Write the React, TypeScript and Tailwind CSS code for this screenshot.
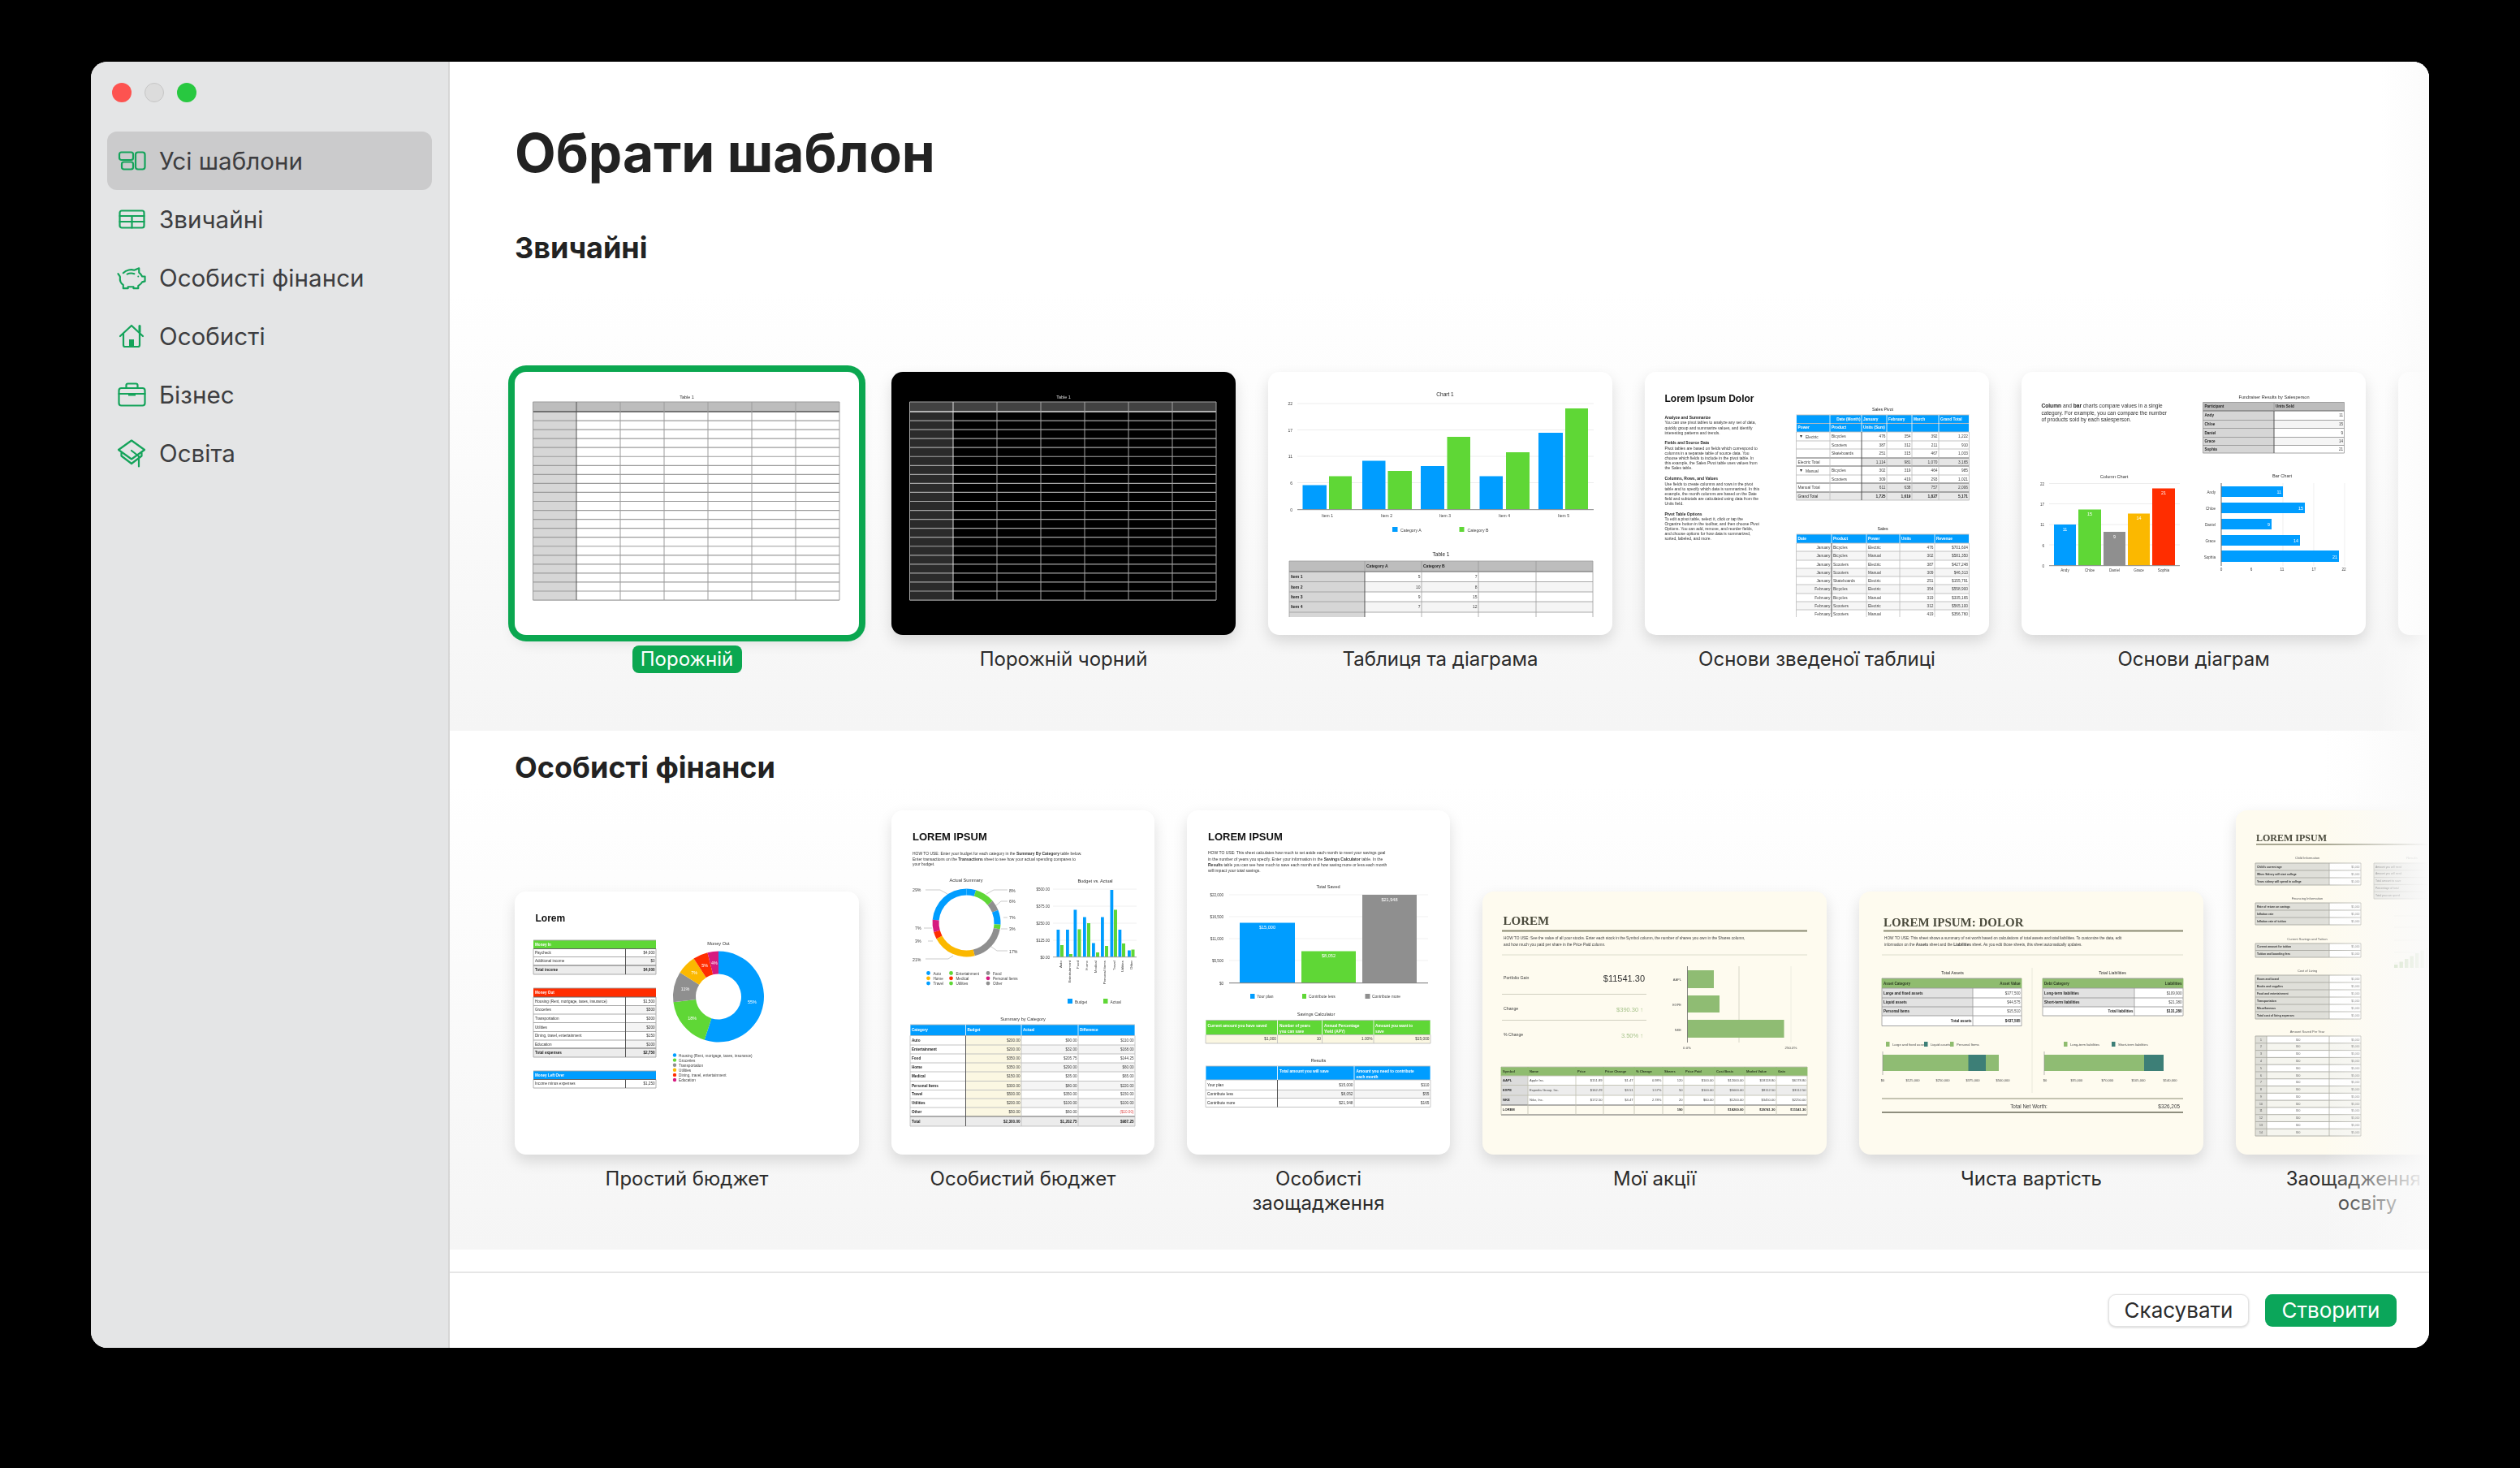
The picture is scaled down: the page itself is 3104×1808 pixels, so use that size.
import React from "react";

const BLUE = "#009dff", GREEN = "#5fd736", GRAY = "#8f8f8f", ORANGE = "#fbb800", RED = "#ff2d00", MAG = "#d61a7f";
const SAGE = "#8fbc6f";
const TONE: Record<string, string> = { "#555": "#3c3c3c", "#444": "#303030", "#666": "#484848", "#777": "#5a5a5a", "#333": "#222" };

type TP = { x: number; y: number; s?: number; b?: boolean; a?: "start" | "middle" | "end"; c?: string; serif?: boolean; rot?: number; children?: React.ReactNode };
function T({ x, y, s = 5, b, a = "start", c = "#333", serif, rot, children }: TP) {
  return (
    <text x={x} y={y} fontSize={s} fontWeight={b ? 700 : 400} textAnchor={a} fill={TONE[c] || c}
      fontFamily={serif ? "Liberation Serif, serif" : "Liberation Sans, sans-serif"}
      transform={rot !== undefined ? `rotate(${rot} ${x} ${y})` : undefined}>
      {children}
    </text>
  );
}
type CS = { fill?: string; b?: boolean; a?: "l" | "r" | "c"; c?: string };
type TbP = { cols: number[]; ys: number[]; data: string[][]; st: (r: number, c: number) => CS; s?: number; line?: string; dark?: number[]; darkH?: number[]; hdr?: number; hdrLine?: string; noBottom?: boolean };
function Tb({ cols, ys, data, st, s = 5, line = "#a0a0a0", dark = [], darkH = [], hdr = 1, hdrLine = "#ffffff", noBottom }: TbP) {
  const out: React.ReactNode[] = [];
  for (let r = 0; r < ys.length - 1; r++) {
    for (let c = 0; c < cols.length - 1; c++) {
      const k = st(r, c);
      if (k.fill) out.push(<rect key={`f${r}-${c}`} x={cols[c]} y={ys[r]} width={cols[c + 1] - cols[c]} height={ys[r + 1] - ys[r]} fill={k.fill} />);
    }
  }
  ys.forEach((y, i) => {
    if (noBottom && i === ys.length - 1) return;
    out.push(<line key={`h${i}`} x1={cols[0]} x2={cols[cols.length - 1]} y1={y} y2={y} stroke={darkH.includes(i) ? "#666" : line} strokeWidth={darkH.includes(i) ? 1.2 : 0.9} />);
  });
  cols.forEach((x, i) => {
    if (hdr > 0) out.push(<line key={`vh${i}`} x1={x} x2={x} y1={ys[0]} y2={ys[hdr]} stroke={hdrLine} strokeWidth={0.8} />);
    out.push(<line key={`v${i}`} x1={x} x2={x} y1={ys[hdr]} y2={ys[ys.length - 1]} stroke={dark.includes(i) ? "#555" : line} strokeWidth={dark.includes(i) ? 1 : 0.8} />);
  });
  data.forEach((row, r) =>
    row.forEach((t, c) => {
      if (!t) return;
      const k = st(r, c);
      const al = k.a || "l";
      const x = al === "l" ? cols[c] + 2 : al === "r" ? cols[c + 1] - 1.5 : (cols[c] + cols[c + 1]) / 2;
      out.push(
        <T key={`t${r}-${c}`} x={x} y={(ys[r] + ys[r + 1]) / 2 + s * 0.35} s={s} b={k.b} c={k.c || "#333"} a={al === "l" ? "start" : al === "r" ? "end" : "middle"}>
          {t}
        </T>
      );
    })
  );
  return <g>{out}</g>;
}
function arc(cx: number, cy: number, r0: number, r1: number, a0: number, a1: number) {
  const p = (r: number, a: number) => {
    const t = ((a - 90) * Math.PI) / 180;
    return `${(cx + r * Math.cos(t)).toFixed(2)} ${(cy + r * Math.sin(t)).toFixed(2)}`;
  };
  const lg = a1 - a0 > 180 ? 1 : 0;
  return `M${p(r1, a0)}A${r1} ${r1} 0 ${lg} 1 ${p(r1, a1)}L${p(r0, a1)}A${r0} ${r0} 0 ${lg} 0 ${p(r0, a0)}Z`;
}
function R({ x, y, x2, y2, f }: { x: number; y: number; x2: number; y2: number; f: string }) {
  return <rect x={x} y={y} width={x2 - x} height={y2 - y} fill={f} />;
}
function Hl({ x, x2, y, c = "#e8e8e8", w = 0.8 }: { x: number; x2: number; y: number; c?: string; w?: number }) {
  return <line x1={x} x2={x2} y1={y} y2={y} stroke={c} strokeWidth={w} />;
}
function Thumb({ w, h, children }: { w: number; h: number; children: React.ReactNode }) {
  return (
    <svg viewBox={`0 0 ${w} ${h}`} width={w} height={h} className="block blur-[0.3px]">
      {children}
    </svg>
  );
}

function Blank({ dark }: { dark?: boolean }) {
  const cols = [22.5, 76, 130, 184, 238, 292, 346, 400];
  const ys = [37, 49];
  for (let i = 1; i <= 21; i++) ys.push(49 + i * 11.05);
  const ln = dark ? "#a4a4a4" : "#9c9c9c";
  return (
    <Thumb w={424} h={324}>
      <T x={212} y={33} s={5.5} a="middle" c={dark ? "#ddd" : "#444"}>Table 1</T>
      <R x={22.5} y={37} x2={400} y2={49} f={dark ? "#424242" : "#bdbdbd"} />
      <R x={22.5} y={49} x2={76} y2={281} f={dark ? "#2b2b2b" : "#d6d6d6"} />
      {ys.map((y, i) => <Hl key={i} x={22.5} x2={400} y={y} c={i === 1 ? (dark ? "#ddd" : "#555") : ln} w={i === 1 ? 1.5 : 1.2} />)}
      {cols.map((x, i) => <line key={i} x1={x} x2={x} y1={37} y2={281} stroke={i === 1 ? (dark ? "#ddd" : "#555") : ln} strokeWidth={1} />)}
    </Thumb>
  );
}

function TableChart() {
  const gy = [39, 71.5, 104, 136.5];
  const bars: [number, number, number, string][] = [
    [42.5, 72, 139.5, BLUE], [75, 103, 128.5, GREEN], [116, 144.5, 109.5, BLUE], [147.5, 177, 122, GREEN],
    [188, 217, 116, BLUE], [220.5, 249, 80, GREEN], [260.5, 289, 128.5, BLUE], [293, 322, 99, GREEN],
    [333, 363, 75, BLUE], [366, 394, 45, GREEN],
  ];
  return (
    <Thumb w={424} h={324}>
      <T x={218} y={29.5} s={6.5} a="middle">Chart 1</T>
      {gy.map((y) => <Hl key={y} x={36} x2={401} y={y} />)}
      {["22", "17", "11", "6", "0"].map((t, i) => <T key={i} x={30} y={[41, 73.5, 106, 139, 171.5][i]} s={5} a="end" c="#555">{t}</T>)}
      {bars.map((b, i) => <R key={i} x={b[0]} x2={b[1]} y={b[2]} y2={169.5} f={b[3]} />)}
      <Hl x={36} x2={401} y={169.7} c="#888" w={1} />
      {[73, 146, 218, 291, 364].map((x, i) => <T key={i} x={x} y={179} s={5} a="middle" c="#555">{`Item ${i + 1}`}</T>)}
      <R x={153} x2={159.5} y={191} y2={197} f={BLUE} /><T x={163} y={196.5} s={5.2} c="#555">Category A</T>
      <R x={235.5} x2={241.5} y={191} y2={197} f={GREEN} /><T x={245.5} y={196.5} s={5.2} c="#555">Category B</T>
      <T x={213} y={227} s={6.5} a="middle">Table 1</T>
      <svg x={0} y={0} width={424} height={302}>
        <Tb cols={[26, 119, 189, 259, 330, 400]} ys={[233, 246, 258.5, 271, 283, 296, 308]} s={5} hdr={1} hdrLine="#999" dark={[1]} darkH={[1]}
          data={[["", "Category A", "Category B", "", ""], ["Item 1", "5", "7", "", ""], ["Item 2", "10", "8", "", ""], ["Item 3", "9", "15", "", ""], ["Item 4", "7", "12", "", ""], ["", "", "", "", ""]]}
          st={(r, c) => r === 0 ? { fill: "#bdbdbd", b: true } : c === 0 ? { fill: "#d6d6d6", b: true } : { fill: r % 2 === 0 ? "#f5f5f5" : "#fff", a: "r", c: "#555" }} />
      </svg>
    </Thumb>
  );
}

const PIVOT_TEXT: [number, string, boolean?][] = [
  [58, "Analyze and Summarize", true], [64, "You can use pivot tables to analyze any set of data,"], [70.5, "quickly group and summarize values, and identify"], [77, "interesting patterns and trends."],
  [89, "Fields and Source Data", true], [95.5, "Pivot tables are based on fields which correspond to"], [102, "columns in a separate table of source data. You"], [108, "choose which fields to include in the pivot table. In"], [114, "this example, the Sales Pivot table uses values from"], [120, "the Sales table."],
  [133, "Columns, Rows, and Values", true], [139.5, "Use fields to create columns and rows in the pivot"], [145.5, "table and to specify which data is summarized. In this"], [151.5, "example, the month columns are based on the Date"], [158, "field and subtotals are calculated using data from the"], [164, "Units field."],
  [177, "Pivot Table Options", true], [183, "To edit a pivot table, select it, click or tap the"], [189, "Organize button in the toolbar, and then choose Pivot"], [195, "Options. You can add, remove, and reorder fields,"], [201, "and choose options for how data is summarized,"], [207, "sorted, labeled, and more."],
];
function Pivot() {
  const sales = [["Date", "Product", "Power", "Units", "Revenue"], ["January", "Bicycles", "Electric", "476", "$701,604"], ["January", "Bicycles", "Manual", "302", "$581,350"], ["January", "Scooters", "Electric", "387", "$427,248"], ["January", "Scooters", "Manual", "309", "$46,313"], ["January", "Skateboards", "Electric", "251", "$155,791"], ["February", "Bicycles", "Electric", "354", "$558,900"], ["February", "Bicycles", "Manual", "319", "$335,165"], ["February", "Scooters", "Electric", "312", "$565,100"], ["February", "Scooters", "Manual", "419", "$356,760"]];
  const piv = [["", "Date (Month)", "January", "February", "March", "Grand Total"], ["Power", "Product", "Units (Sum)", "", "", ""], ["", "Bicycles", "476", "354", "392", "1,222"], ["", "Scooters", "387", "312", "211", "910"], ["", "Skateboards", "251", "315", "467", "1,033"], ["Electric Total", "", "1,114", "981", "1,070", "3,165"], ["", "Bicycles", "302", "319", "464", "985"], ["", "Scooters", "309", "419", "293", "1,021"], ["Manual Total", "", "611", "638", "757", "2,006"], ["Grand Total", "", "1,725", "1,619", "1,827", "5,171"]];
  return (
    <Thumb w={424} h={324}>
      <T x={24.5} y={37} s={12} b c="#111">Lorem Ipsum Dolor</T>
      {PIVOT_TEXT.map(([y, t, b], i) => <T key={i} x={24.5} y={y} s={4.95} b={b} c={b ? "#222" : "#444"}>{t}</T>)}
      <T x={293} y={48} s={5.2} a="middle">Sales Pivot</T>
      <Tb cols={[186.5, 228, 267, 298, 329, 362, 399.5]} ys={[53, 63.5, 74, 85, 95, 106, 116, 127, 137, 148, 158]} s={4.8} hdr={2} dark={[2]} darkH={[5, 6, 8, 9]} line="#bcbcbc" data={piv}
        st={(r, c) => r < 2 ? { fill: BLUE, c: "#fff", b: true, a: r === 0 && c === 1 ? "r" : "l" }
          : r === 5 || r === 8 ? { fill: c > 1 ? "#e6e6e6" : "#fff", a: c > 1 ? "r" : "l", c: "#555" }
          : r === 9 ? { fill: "#e8e8e8", a: c > 1 ? "r" : "l", b: c > 1, c: "#333" }
          : { a: c > 1 ? "r" : "l", c: "#555" }} />
      <path d="M191 78l3 0-1.5 3z M191 120l3 0-1.5 3z" fill="#222" />
      <T x={198} y={81.5} s={4.8} c="#555">Electric</T>
      <T x={198} y={124} s={4.8} c="#555">Manual</T>
      <T x={293} y={195} s={5.2} a="middle">Sales</T>
      <svg x={0} y={0} width={424} height={302}>
        <Tb cols={[186.5, 230, 273, 314, 357, 399.5]} ys={[200, 211, 221, 232, 242, 252, 262, 273, 283, 293, 304]} s={4.8} hdr={1} dark={[1]} line="#bcbcbc" data={sales}
          st={(r, c) => r === 0 ? { fill: BLUE, c: "#fff", b: true } : { fill: r % 2 === 0 ? "#f6f6f6" : "#fff", a: c === 0 || c > 2 ? "r" : "l", c: "#555" }} />
      </svg>
    </Thumb>
  );
}

function ChartBasics() {
  return (
    <Thumb w={424} h={324}>
      <text x={24.5} y={44} fontSize={6.6} fill="#333" fontFamily="Liberation Sans, sans-serif"><tspan fontWeight={700} fill="#222">Column</tspan> and <tspan fontWeight={700} fill="#222">bar</tspan> charts compare values in a single</text>
      <T x={24.5} y={52.5} s={6.6} c="#444">category. For example, you can compare the number</T>
      <T x={24.5} y={61} s={6.6} c="#444">of products sold by each salesperson.</T>
      <T x={311} y={33} s={5.6} a="middle" c="#444">Fundraiser Results by Salesperson</T>
      <Tb cols={[223.5, 311, 397.5]} ys={[37.5, 48, 59.5, 69.5, 80.5, 90.5, 100]} s={4.6} hdr={1} hdrLine="#999" dark={[1]} darkH={[1]} line="#999"
        data={[["Participant", "Units Sold"], ["Andy", "11"], ["Chloe", "15"], ["Daniel", "9"], ["Grace", "14"], ["Sophia", "21"]]}
        st={(r, c) => r === 0 ? { fill: "#bdbdbd", b: true } : c === 0 ? { fill: "#d6d6d6", b: true } : { fill: r % 2 === 0 ? "#f5f5f5" : "#fff", a: "r", c: "#555" }} />
      <T x={114} y={131} s={5.6} a="middle" c="#444">Column Chart</T>
      {[137.5, 162.5, 188, 213].map((y) => <Hl key={y} x={34} x2={195} y={y} />)}
      {["22", "17", "11", "6", "0"].map((t, i) => <T key={i} x={28} y={[140, 165, 190, 215.5, 240.5][i]} s={4.6} a="end" c="#555">{t}</T>)}
      {([[40, 67, 188, BLUE, "11", 53.5], [70, 98, 169.5, GREEN, "15", 84], [101, 128, 197, GRAY, "9", 114.5], [131, 158, 174.5, ORANGE, "14", 144.5], [161, 189, 143.5, RED, "21", 175]] as [number, number, number, string, string, number][]).map((b, i) => (
        <g key={i}>
          <R x={b[0]} x2={b[1]} y={b[2]} y2={238.5} f={b[3]} />
          <T x={b[5]} y={b[2] + 7.5} s={5.4} a="middle" c="#fff">{b[4]}</T>
          <T x={b[5]} y={246} s={4.6} a="middle" c="#555">{["Andy", "Chloe", "Daniel", "Grace", "Sophia"][i]}</T>
        </g>
      ))}
      <Hl x={34} x2={195} y={238.7} c="#888" w={1} />
      <T x={321} y={130} s={5.6} a="middle" c="#444">Bar Chart</T>
      {[322, 360, 398].map((x) => <line key={x} x1={x} x2={x} y1={137} y2={239} stroke="#eaeaea" strokeWidth={0.7} />)}
      {([[141, 154, 322, "11"], [161, 174, 349, "15"], [181, 194, 308, "9"], [201, 214, 343, "14"], [220, 234, 391, "21"]] as [number, number, number, string][]).map((b, i) => (
        <g key={i}>
          <R x={246} x2={b[2]} y={b[0]} y2={b[1]} f={BLUE} />
          <T x={b[2] - 2} y={b[1] - 4.5} s={5.4} a="end" c="#fff">{b[3]}</T>
          <T x={239} y={b[1] - 4.5} s={4.6} a="end" c="#555">{["Andy", "Chloe", "Daniel", "Grace", "Sophia"][i]}</T>
        </g>
      ))}
      <line x1={246} x2={246} y1={137} y2={239} stroke="#666" strokeWidth={1} />
      {[[246, "0"], [283, "6"], [321, "11"], [360, "17"], [397, "22"]].map(([x, t]) => <T key={x as number} x={x as number} y={245} s={4.6} a="middle" c="#555">{t}</T>)}
    </Thumb>
  );
}

function SimpleBudget() {
  const segs: [number, number, string, string][] = [[0, 198, BLUE, "55%"], [198, 263, GREEN, "18%"], [263, 302, GRAY, "11%"], [302, 327, ORANGE, "7%"], [327, 346, RED, "5%"], [346, 360, MAG, "4%"]];
  const lab = (a: number) => { const t = ((a - 90) * Math.PI) / 180; return [251 + 42 * Math.cos(t), 129.5 + 42 * Math.sin(t) + 2]; };
  const st0 = (n: number) => (r: number, c: number): CS => r === 0 ? { b: true, c: "#fff" } : r === n ? { fill: "#ececec", b: true, a: c === 1 ? "r" : "l" } : { fill: c === 1 && r % 2 === 0 ? "#f4f4f4" : "#fff", a: c === 1 ? "r" : "l", c: "#444" };
  return (
    <Thumb w={424} h={324}>
      <T x={25.5} y={37} s={12} b c="#111">Lorem</T>
      <R x={23} x2={174} y={60} y2={70.5} f={GREEN} />
      <Tb cols={[23, 136.5, 174]} ys={[60, 70.5, 80.5, 91, 102]} s={4.6} hdr={1} hdrLine="transparent" dark={[1]} darkH={[1, 3]} data={[["Money In", ""], ["Paycheck", "$4,000"], ["Additional income", "$0"], ["Total income", "$4,000"]]} st={st0(3)} />
      <R x={23} x2={174} y={119} y2={130} f={RED} />
      <Tb cols={[23, 136.5, 174]} ys={[119, 130, 140.5, 151, 161.5, 172.5, 183, 193, 204]} s={4.6} hdr={1} hdrLine="transparent" dark={[1]} darkH={[1, 7]} data={[["Money Out", ""], ["Housing (Rent, mortgage, taxes, insurance)", "$1,500"], ["Groceries", "$500"], ["Transportation", "$300"], ["Utilities", "$200"], ["Dining, travel, entertainment", "$150"], ["Education", "$100"], ["Total expenses", "$2,750"]]} st={st0(7)} />
      <R x={23} x2={174} y={221} y2={231.5} f={BLUE} />
      <Tb cols={[23, 136.5, 174]} ys={[221, 231.5, 242]} s={4.6} hdr={1} hdrLine="transparent" dark={[1]} darkH={[1]} data={[["Money Left Over", ""], ["Income minus expenses", "$1,250"]]} st={st0(9)} />
      <T x={251} y={66} s={5.6} a="middle" c="#444">Money Out</T>
      {segs.map((s, i) => <path key={i} d={arc(251, 129.5, 28, 56, s[0], s[1])} fill={s[2]} />)}
      {segs.map((s, i) => { const [x, y] = lab((s[0] + s[1]) / 2); return <T key={i} x={x} y={y} s={5.4} a="middle" c="#fff">{s[3]}</T>; })}
      {(["Housing (Rent, mortgage, taxes, insurance)", "Groceries", "Transportation", "Utilities", "Dining, travel, entertainment", "Education"]).map((t, i) => (
        <g key={i}>
          <circle cx={197} cy={201.5 + i * 6.1} r={2.2} fill={segs[i][2]} />
          <T x={202} y={203.5 + i * 6.1} s={4.7} c="#555">{t}</T>
        </g>
      ))}
    </Thumb>
  );
}

function PersonalBudget() {
  const ring: [number, number, string][] = [[-85, 16, BLUE], [16, 50, GREEN], [50, 68, GRAY], [68, 93, BLUE], [93, 101, GREEN], [101, 166, GRAY], [166, 242, ORANGE], [242, 254, RED], [254, 275, MAG]];
  const ang = (a: number) => a < 0 ? a + 360 : a;
  const blue = [147, 147, 122.5, 131.5, 163.5, 131.5, 98, 147, 172.5], green = [166, 177, 146.5, 139, 175, 167, 122.5, 164, 171.5];
  const bx = [203.5, 215, 224.5, 236, 247, 258, 269.5, 279.5, 291], gx = [208, 219, 229.5, 241, 252, 263, 274, 284, 295.5];
  const cats = ["Auto", "Entertainment", "Food", "Home", "Medical", "Personal Items", "Travel", "Utilities", "Other"];
  const data = [["Category", "Budget", "Actual", "Difference"], ["Auto", "$200.00", "$90.00", "$110.00"], ["Entertainment", "$200.00", "$32.00", "$168.00"], ["Food", "$350.00", "$205.75", "$144.25"], ["Home", "$350.00", "$290.00", "$60.00"], ["Medical", "$150.00", "$35.00", "$65.00"], ["Personal Items", "$300.00", "$80.00", "$220.00"], ["Travel", "$500.00", "$350.00", "$150.00"], ["Utilities", "$200.00", "$100.00", "$100.00"], ["Other", "$50.00", "$60.00", "($10.00)"], ["Total", "$2,300.00", "$1,202.75", "$987.25"]];
  return (
    <Thumb w={324} h={424}>
      <T x={26} y={37} s={13} b c="#111">LOREM IPSUM</T>
      <text x={26} y={54.5} fontSize={4.95} fill="#333" fontFamily="Liberation Sans, sans-serif">HOW TO USE: Enter your budget for each category in the <tspan fontWeight={700}>Summary By Category</tspan> table below.</text>
      <text x={26} y={61.5} fontSize={4.95} fill="#333" fontFamily="Liberation Sans, sans-serif">Enter transactions on the <tspan fontWeight={700}>Transactions</tspan> sheet to see how your actual spending compares to</text>
      <T x={26} y={68} s={4.95} c="#444">your budget.</T>
      <T x={92} y={88} s={5.6} a="middle" c="#444">Actual Summary</T>
      {ring.map((s, i) => s[0] < 0
        ? <g key={i}><path d={arc(92.5, 138.5, 34, 42, ang(s[0]), 360)} fill={s[2]} /><path d={arc(92.5, 138.5, 34, 42, 0, s[1])} fill={s[2]} /></g>
        : <path key={i} d={arc(92.5, 138.5, 34, 42, s[0], s[1])} fill={s[2]} />)}
      <g fill="none" stroke="#aaa" strokeWidth={0.6}>
        <path d="M42 98H60L69 103M143 98H126L117 103M143 112H135L128 118M143 132H138M143 146H135M143 173H130L123 168M40 145H50M45 161H51M42 183H70L76 179" />
      </g>
      {([[26, 100, "29%"], [145, 100.5, "8%"], [145, 114, "6%"], [145, 134, "7%"], [145, 147.5, "3%"], [145, 175.5, "17%"], [29, 147, "7%"], [29, 163, "3%"], [26, 185.5, "21%"]] as [number, number, string][]).map((l, i) => <T key={i} x={l[0]} y={l[1]} s={5.2} c="#555">{l[2]}</T>)}
      {([[45.5, BLUE, "Auto"], [73.5, GREEN, "Entertainment"], [119, GRAY, "Food"], [45.5, ORANGE, "Home"], [73.5, RED, "Medical"], [119, MAG, "Personal Items"], [45.5, BLUE, "Travel"], [73.5, GREEN, "Utilities"], [119, GRAY, "Other"]] as [number, string, string][]).map((l, i) => (
        <g key={i}>
          <circle cx={l[0]} cy={200.5 + Math.floor(i / 3) * 6.3} r={2.4} fill={l[1]} />
          <T x={l[0] + 6} y={202.5 + Math.floor(i / 3) * 6.3} s={4.6} c="#555">{l[2]}</T>
        </g>
      ))}
      <T x={251} y={89} s={5.6} a="middle" c="#444">Budget vs. Actual</T>
      {[97, 118, 139, 160].map((y) => <Hl key={y} x={199} x2={302} y={y} c="#ececec" />)}
      {["$500.00", "$375.00", "$250.00", "$125.00", "$0.00"].map((t, i) => <T key={i} x={195} y={[99, 120, 141, 162, 182.5][i]} s={4.6} a="end" c="#555">{t}</T>)}
      {bx.map((x, i) => <R key={i} x={x} x2={x + 3.8} y={blue[i]} y2={180.5} f={BLUE} />)}
      {gx.map((x, i) => <R key={i} x={x} x2={x + 4} y={green[i]} y2={180.5} f={GREEN} />)}
      <Hl x={199} x2={302} y={180.7} c="#888" />
      {cats.map((c, i) => <T key={i} x={bx[i] + 6} y={185} s={4.4} a="end" rot={-90} c="#555">{c}</T>)}
      <R x={217} x2={223} y={232} y2={238} f={BLUE} /><T x={226} y={237.5} s={4.8} c="#555">Budget</T>
      <R x={261} x2={266.5} y={232} y2={238} f={GREEN} /><T x={269.5} y={237.5} s={4.8} c="#555">Actual</T>
      <T x={162} y={259} s={5.6} a="middle" c="#444">Summary by Category</T>
      <Tb cols={[23, 91.5, 160, 230, 300]} ys={[264, 277.5, 289, 300, 311, 322, 333.5, 344.5, 355, 366, 377, 389]} s={4.6} hdr={1} dark={[1]} darkH={[10]} line="#bcbcbc" data={data}
        st={(r, c) => r === 0 ? { fill: BLUE, c: "#fff", b: true } : r === 10 ? { fill: "#ececec", b: true, a: c ? "r" : "l" } : c === 0 ? { b: true } : c === 1 ? { fill: "#fbf7e2", a: "r", c: "#555" } : { fill: r % 2 === 0 ? "#f5f5f5" : "#fff", a: "r", c: r === 9 && c === 3 ? "#e05050" : "#555" }} />
    </Thumb>
  );
}

function Savings() {
  return (
    <Thumb w={324} h={424}>
      <T x={26} y={37} s={13} b c="#111">LOREM IPSUM</T>
      <T x={26} y={54} s={5} c="#444">HOW TO USE: This sheet calculates how much to set aside each month to meet your savings goal</T>
      <text x={26} y={61.5} fontSize={5} fill="#333" fontFamily="Liberation Sans, sans-serif">in the number of years you specify. Enter your information in the <tspan fontWeight={700}>Savings Calculator</tspan> table. In the</text>
      <text x={26} y={68.5} fontSize={5} fill="#333" fontFamily="Liberation Sans, sans-serif"><tspan fontWeight={700}>Results</tspan> table you can see how much to save each month and how saving more or less each month</text>
      <T x={26} y={76} s={5} c="#444">will impact your total savings.</T>
      <T x={174} y={96} s={5.6} a="middle" c="#444">Total Saved</T>
      {[104, 131, 158, 185].map((y) => <Hl key={y} x={52} x2={297} y={y} c="#eee" />)}
      {["$22,000", "$16,500", "$11,000", "$5,500", "$0"].map((t, i) => <T key={i} x={45} y={[106, 133, 160, 187, 214.5][i]} s={4.6} a="end" c="#555">{t}</T>)}
      {([[65, 133, 138.5, BLUE, "$15,000"], [141, 208, 173.5, GREEN, "$8,052"], [216, 283, 104, GRAY, "$21,948"]] as [number, number, number, string, string][]).map((b, i) => (
        <g key={i}>
          <R x={b[0]} x2={b[1]} y={b[2]} y2={212.5} f={b[3]} />
          <T x={(b[0] + b[1]) / 2} y={b[2] + 7.5} s={5.6} a="middle" c="#fff">{b[4]}</T>
        </g>
      ))}
      <Hl x={52} x2={297} y={212.7} c="#777" w={1} />
      <R x={78} x2={83.5} y={226} y2={232} f={BLUE} /><T x={86} y={231} s={4.9} c="#555">Your plan</T>
      <R x={142} x2={147} y={226} y2={232} f={GREEN} /><T x={150} y={231} s={4.9} c="#555">Contribute less</T>
      <R x={219.5} x2={225.5} y={226} y2={232} f={GRAY} /><T x={228} y={231} s={4.9} c="#555">Contribute more</T>
      <T x={159} y={253} s={5.6} a="middle" c="#444">Savings Calculator</T>
      <Tb cols={[23, 111.5, 166.5, 230, 300]} ys={[258.5, 276.5, 287]} s={4.8} hdr={1} line="#bcbcbc" data={[["", "", "", ""], ["$1,000", "10", "1.00%", "$15,000"]]}
        st={(r) => r === 0 ? { fill: GREEN } : { fill: "#fbf7e2", a: "r", c: "#555" }} />
      {([[25.5, "Current amount you have saved"], [114, "Number of years"], [169, "Annual Percentage"], [232, "Amount you want to"]] as [number, string][]).map((l, i) => <T key={i} x={l[0]} y={266.5} s={4.8} b c="#fff">{l[1]}</T>)}
      {([[114, "you can save"], [169, "Yield (APY)"], [232, "save"]] as [number, string][]).map((l, i) => <T key={i} x={l[0]} y={273.5} s={4.8} b c="#fff">{l[1]}</T>)}
      <T x={162} y={310} s={5.6} a="middle" c="#444">Results</T>
      <Tb cols={[23, 111.5, 206, 300]} ys={[315, 332, 344.5, 354.5, 365.5]} s={4.8} hdr={1} dark={[1]} line="#bcbcbc" data={[["", "", ""], ["Your plan", "$15,000", "$110"], ["Contribute less", "$8,052", "$55"], ["Contribute more", "$21,948", "$165"]]}
        st={(r, c) => r === 0 ? { fill: BLUE } : { fill: r === 2 && c ? "#f5f5f5" : "#fff", a: c ? "r" : "l", c: c ? "#555" : "#333" }} />
      <T x={114} y={322.5} s={4.8} b c="#fff">Total amount you will save</T>
      <T x={208.5} y={322.5} s={4.8} b c="#fff">Amount you need to contribute</T>
      <T x={208.5} y={329.5} s={4.8} b c="#fff">each month</T>
    </Thumb>
  );
}

function Stocks() {
  const d = [["Symbol", "Name", "Price", "Price Change", "% Change", "Shares", "Price Paid", "Cost Basis", "Market Value", "Gain"], ["AAPL", "Apple Inc.", "$151.89", "$1.47", "0.98%", "120", "$100.00", "$12000.00", "$18118.80", "$6178.80"], ["EXPE", "Expedia Group, Inc.", "$162.29", "$3.51", "1.57%", "50", "$100.00", "$5000.00", "$8112.50", "$3112.50"], ["NKE", "Nike, Inc.", "$172.50", "$4.47", "2.78%", "20", "$60.00", "$1200.00", "$3450.00", "$2250.00"], ["LOREM", "", "", "", "", "190", "", "$18200.00", "$29741.30", "$11541.30"]];
  return (
    <Thumb w={424} h={324}>
      <T x={25.5} y={41} s={15} b serif c="#4a4a3c">LOREM</T>
      <Hl x={24} x2={400} y={48.5} c="#8a8a72" w={2} />
      <T x={26} y={59} s={4.75} c="#555">HOW TO USE: See the value of all your stocks. Enter each stock in the Symbol column, the number of shares you own in the Shares column,</T>
      <T x={26} y={67} s={4.75} c="#555">and how much you paid per share in the Price Paid column.</T>
      <Hl x={24} x2={400} y={78} c="#dcdccc" w={1} />
      <T x={26} y={108} s={5.2} c="#555">Portfolio Gain</T>
      <T x={200} y={110.5} s={11} a="end" c="#444">$11541.30</T>
      <Hl x={24} x2={202} y={126.5} c="#c5c5b5" />
      <T x={26} y={146} s={5.2} c="#555">Change</T>
      <T x={198} y={147.5} s={7.5} a="end" c="#a5c28a">$390.30 ↑</T>
      <Hl x={24} x2={202} y={158.5} c="#c5c5b5" />
      <T x={26} y={178} s={5.2} c="#555">% Change</T>
      <T x={198} y={179.5} s={7.5} a="end" c="#a5c28a">3.50% ↑</T>
      <line x1={316} x2={316} y1={92} y2={186} stroke="#cfcfbf" strokeWidth={0.8} />
      <line x1={380} x2={380} y1={92} y2={186} stroke="#ecece0" strokeWidth={0.8} />
      <R x={252.5} x2={285} y={97} y2={119} f="#8fbc73" />
      <R x={252.5} x2={292} y={128} y2={149} f="#8fbc73" />
      <R x={252.5} x2={371.5} y={158} y2={180} f="#8fbc73" />
      <line x1={252.5} x2={252.5} y1={92} y2={186} stroke="#666" strokeWidth={0.8} />
      <T x={245} y={110} s={4} a="end" c="#666">AAPL</T><T x={245} y={140.5} s={4} a="end" c="#666">EXPE</T><T x={245} y={171.5} s={4} a="end" c="#666">NKE</T>
      <T x={252} y={193.5} s={4.4} a="middle" c="#666">0.0%</T><T x={380} y={193.5} s={4.4} a="middle" c="#666">250.0%</T>
      <Tb cols={[23, 56, 115, 149, 187, 222, 248, 286, 323, 362, 400]} ys={[216, 227, 238.5, 251, 263, 275]} s={4.1} hdr={1} hdrLine={SAGE} line="#c0c0b0" darkH={[4, 5]} data={d}
        st={(r, c) => r === 0 ? { fill: SAGE, b: true, c: "#2c3a22", a: "l" } : r === 4 ? { fill: "#fefbef", b: true, a: c ? "r" : "l" } : c === 0 ? { fill: "#dcdcdc", b: true } : c === 1 ? { fill: r === 2 ? "#ededed" : "#fff", c: "#666" } : { fill: r === 2 ? "#ededed" : "#fff", a: "r", c: "#666" }} />
    </Thumb>
  );
}

function NetWorth() {
  const st = (n: number) => (r: number, c: number): CS => r === 0 ? { fill: SAGE, b: true, c: "#2c3a22", a: c ? "r" : "l" } : r >= n ? { fill: "#fff", b: true, a: "r" } : c === 0 ? { fill: "#e2e2e2", b: true } : { fill: "#fff", a: "r", c: "#666" };
  return (
    <Thumb w={424} h={324}>
      <T x={30} y={43} s={15} b serif c="#4a4a3c">LOREM IPSUM: DOLOR</T>
      <Hl x={30} x2={399} y={48.5} c="#8a8a72" w={2} />
      <T x={31} y={59} s={4.7} c="#555">HOW TO USE: This sheet shows a summary of net worth based on calculations of total assets and total liabilities. To customize the data, edit</T>
      <text x={31} y={67} fontSize={4.7} fill="#3c3c3c" fontFamily="Liberation Sans, sans-serif">information on the <tspan fontWeight={700}>Assets</tspan> sheet and the <tspan fontWeight={700}>Liabilities</tspan> sheet. As you edit those sheets, this sheet automatically updates.</text>
      <Hl x={28} x2={399} y={78} c="#dcdccc" w={1} />
      <line x1={213} x2={213} y1={94} y2={248} stroke="#e6e6d8" strokeWidth={0.8} />
      <T x={115} y={102} s={5.2} a="middle" c="#444">Total Assets</T>
      <T x={312} y={102} s={5.2} a="middle" c="#444">Total Liabilities</T>
      <Tb cols={[28, 140, 200]} ys={[107, 119, 131, 142, 153, 165.5]} s={4.5} hdr={1} hdrLine={SAGE} line="#999" data={[["Asset Category", "Asset Value"], ["Large and fixed assets", "$377,500"], ["Liquid assets", "$44,575"], ["Personal Items", "$15,510"], ["Total assets", "$437,585"]]} st={st(4)} />
      <Tb cols={[226, 339, 399]} ys={[107, 119, 131, 142, 153]} s={4.5} hdr={1} hdrLine={SAGE} line="#999" data={[["Debt Category", "Liabilities"], ["Long-term liabilities", "$109,900"], ["Short-term liabilities", "$21,380"], ["Total liabilities", "$131,280"]]} st={st(3)} />
      {([[33, SAGE, "Large and fixed assets"], [80, "#3d7f77", "Liquid assets"], [112, SAGE, "Personal Items"], [252, SAGE, "Long-term liabilities"], [311, "#3d7f77", "Short-term liabilities"]] as [number, string, string][]).map((l, i) => (
        <g key={i}>
          <R x={l[0]} x2={l[0] + 4.5} y={185} y2={191} f={l[1]} />
          <T x={l[0] + 8} y={190} s={4.2} c="#666">{l[2]}</T>
        </g>
      ))}
      <R x={29} x2={172} y={201} y2={221} f="#8fbc73" />
      <R x={134.5} x2={156} y={201} y2={221} f="#3d7f77" />
      <R x={228} x2={375} y={201} y2={221} f="#8fbc73" />
      <R x={351} x2={375} y={201} y2={221} f="#3d7f77" />
      <line x1={29} x2={29} y1={197} y2={226} stroke="#888" strokeWidth={0.6} />
      <line x1={228} x2={228} y1={197} y2={226} stroke="#888" strokeWidth={0.6} />
      {[["$0", 29], ["$125,000", 66], ["$250,000", 103], ["$375,000", 140], ["$500,000", 177]].map(([t, x]) => <T key={x as number} x={x as number} y={234} s={4.1} a="middle" c="#666">{t}</T>)}
      {[["$0", 229], ["$35,000", 268], ["$70,000", 306], ["$105,000", 344], ["$140,000", 383]].map(([t, x]) => <T key={x as number} x={x as number} y={234} s={4.1} a="middle" c="#666">{t}</T>)}
      <Hl x={28} x2={399} y={255} c="#8a8a72" w={1} />
      <T x={209} y={267} s={6.4} a="middle" c="#555">Total Net Worth:</T>
      <T x={395} y={267} s={6.4} a="end" c="#555">$326,205</T>
      <Hl x={28} x2={399} y={272} c="#6a6a58" w={1.4} />
    </Thumb>
  );
}

function Tuition() {
  const block = (title: string, ty: number, top: number, n: number, h: number, labels: string[]) => {
    const ys = Array.from({ length: n + 1 }, (_, i) => top + i * h);
    return (
      <g key={title}>
        <T x={88} y={ty} s={4} a="middle" c="#777">{title}</T>
        <Tb cols={[24, 115, 154]} ys={ys} s={3.4} hdr={0} line="#a8a8a0" data={labels.map((l) => [l, "$1,000"])} st={(r, c) => c === 0 ? { fill: "#dfdfd9", c: "#444", b: true } : { fill: "#fff", a: "r", c: "#777" }} />
      </g>
    );
  };
  const ys = Array.from({ length: 15 }, (_, i) => 278 + i * 8.79);
  return (
    <Thumb w={324} h={424}>
      <T x={25} y={37.5} s={12} b serif c="#4a4a3c">LOREM IPSUM</T>
      <Hl x={25} x2={300} y={42} c="#8a8a72" w={1.5} />
      {block("Child Information", 60, 65, 3, 9, ["Child's current age", "When Sidney will start college", "Years sidney will spend in college"])}
      {block("Financing Information", 110, 114, 3, 9, ["Rate of return on savings", "Inflation rate", "Inflation rate of tuition"])}
      {block("Current Savings and Tuition", 160, 164, 2, 8.5, ["Current amount for tuition", "Tuition and boarding fees"])}
      {block("Cost of Living", 199, 203, 6, 9, ["Room and board", "Books and supplies", "Food and entertainment", "Transportation", "Miscellaneous", "Total cost of living expenses"])}
      <T x={88} y={274} s={4} a="middle" c="#777">Amount Saved Per Year</T>
      <Tb cols={[24, 38, 115, 154]} ys={ys} s={3.4} hdr={0} line="#a8a8a0"
        data={ys.slice(0, 14).map((_, i) => [String(i + 1), "300", "$5,000"])}
        st={(r, c) => c === 0 ? { fill: "#dfdfd9", a: "c", c: "#666" } : { fill: r % 2 ? "#f5f5ef" : "#fff", a: c === 1 ? "c" : "r", c: "#777" }} />
      <T x={217} y={60} s={4} a="middle" c="#777">Results</T>
      <Tb cols={[170, 280, 320]} ys={[65, 73.8, 82.6, 91.4, 100.2, 109]} s={3.4} hdr={0} line="#a8a8a0" data={[["Amount you will need", "$1,000"], ["Amount you will need", "$1,000"], ["Total amount to save", "$1,000"], ["Percentage of total", "$1,000"], ["Total you can spend", "$1,000"]]} st={(r, c) => c === 0 ? { fill: "#dfdfd9", c: "#444" } : { fill: "#fff", a: "r", c: "#777" }} />
      {[130, 144, 160, 175, 188].map((y) => <Hl key={y} x={195} x2={320} y={y} c="#e8e8dd" />)}
      {[0, 1, 2, 3, 4, 5, 6, 7, 8].map((i) => <R key={i} x={195 + i * 6.5} x2={199.5 + i * 6.5} y={190 - i * 3.5} y2={194} f="#a9c98f" />)}
    </Thumb>
  );
}

const ICON = "#14a35a";
function SvgI({ w, h, children }: { w: number; h: number; children: React.ReactNode }) {
  return (
    <svg width={w} height={h} viewBox={`0 0 ${w} ${h}`} fill="none" stroke={ICON} strokeWidth={2.2} strokeLinecap="round" strokeLinejoin="round">
      {children}
    </svg>
  );
}
const icons: Record<string, React.ReactNode> = {
  all: (
    <SvgI w={35} h={24}>
      <rect x={2} y={1.5} width={17} height={9.5} rx={2.5} />
      <rect x={5} y={13.5} width={14} height={9} rx={2.5} />
      <rect x={22} y={1.5} width={11.5} height={21} rx={3} />
    </SvgI>
  ),
  table: (
    <SvgI w={33} h={24}>
      <rect x={1.5} y={1.5} width={30} height={21} rx={2.5} />
      <path d="M1.5 8H31.5M1.5 15H31.5M16.5 8V22.5" />
    </SvgI>
  ),
  piggy: (
    <SvgI w={37} h={29}>
      <path d="M8 8C12 4 18 3 22 4.5L28 2V7.5C30 9 31 10.5 32 12.5H35.5V18.5L32 19.5C31 21.5 29 23 27 24.5V27.5H21V25.5H14V27.5H8V23C5 21 3.5 17 4 13.5C4 11.5 2 10 1.5 9" />
      <path d="M13 9.5C16 8 19 8 22 9" />
      <circle cx={27} cy={12.5} r={1} fill={ICON} stroke="none" />
    </SvgI>
  ),
  home: (
    <SvgI w={32} h={30}>
      <path d="M2 15L16 2L30 15" />
      <path d="M26 2.5V10" strokeWidth={3} />
      <path d="M6 12V26a2 2 0 0 0 2 2H24a2 2 0 0 0 2-2V12" />
      <rect x={13} y={19} width={6} height={9} fill={ICON} stroke="none" />
    </SvgI>
  ),
  case: (
    <SvgI w={35} h={30}>
      <rect x={1.5} y={7} width={32} height={21.5} rx={3} />
      <path d="M10.5 7V3.5a2 2 0 0 1 2-2H22.5a2 2 0 0 1 2 2V7M1.5 14H33.5" />
      <rect x={13} y={13} width={9} height={3.5} fill={ICON} stroke="none" />
    </SvgI>
  ),
  cap: (
    <SvgI w={36} h={35}>
      <path d="M18 1.5L34 13L18 24.5L2 13Z" />
      <path d="M5.5 17V20.5L18 30L30.5 20.5V17" />
      <path d="M18 14L27 21V33.5" />
    </SvgI>
  ),
};

const NAV = [
  ["all", "Усі шаблони"], ["table", "Звичайні"], ["piggy", "Особисті фінанси"], ["home", "Особисті"], ["case", "Бізнес"], ["cap", "Освіта"],
];

function Card({ tall, cream, dark, selected, children }: { tall?: boolean; cream?: boolean; dark?: boolean; selected?: boolean; children?: React.ReactNode }) {
  return (
    <div className={`${tall ? "w-[324px] h-[424px]" : "w-[424px] h-[324px]"} ${dark ? "bg-black" : cream ? "bg-[#fefbef]" : "bg-white"} ${selected ? "ring-[8px] ring-[#0ba750]" : ""} rounded-[14px] shrink-0 overflow-hidden shadow-[0_8px_18px_rgba(0,0,0,0.13)]`}>
      {children}
    </div>
  );
}

function Item2({ tall, cream, label, children }: { tall?: boolean; cream?: boolean; label: string; children: React.ReactNode }) {
  return (
    <div className={`${tall ? "w-[324px]" : "w-[424px]"} shrink-0 flex flex-col items-center`}>
      <div className="h-[424px] flex items-end">
        <Card tall={tall} cream={cream}>{children}</Card>
      </div>
      <div className="mt-[15px] max-w-[270px] text-center text-[24px] leading-[30px] text-[#2b2b2b]">{label}</div>
    </div>
  );
}

function Item1({ label, selected, dark, children }: { label: string; selected?: boolean; dark?: boolean; children?: React.ReactNode }) {
  return (
    <div className="w-[424px] shrink-0 flex flex-col items-center">
      <Card selected={selected} dark={dark}>{children}</Card>
      {selected ? (
        <div className="mt-[13px] h-[34px] w-[135px] rounded-[8px] bg-[#0ba750] text-white text-center text-[24px] leading-[34px]">{label}</div>
      ) : (
        <div className="mt-[13px] h-[34px] text-[24px] leading-[34px] text-[#2b2b2b]">{label}</div>
      )}
    </div>
  );
}

export default function App() {
  return (
    <div className="w-[3104px] h-[1808px] bg-black pt-[76px] pl-[112px] font-['Inter',sans-serif] overflow-hidden">
      <div className="w-[2880px] h-[1584px] flex rounded-[20px] overflow-hidden bg-white">
        <aside className="w-[442px] shrink-0 bg-[#e4e5e6] border-r-2 border-[#d6d6d6]">
          <div className="flex gap-[16px] pl-[26px] pt-[26px]">
            <span className="w-[24px] h-[24px] rounded-full bg-[#fd5350]" />
            <span className="w-[24px] h-[24px] rounded-full bg-[#dcdcdc] border border-[#c6c6c6]" />
            <span className="w-[24px] h-[24px] rounded-full bg-[#28c840]" />
          </div>
          <nav className="mt-[36px] pl-[20px] w-[420px] flex flex-col">
            {NAV.map(([k, t], i) => (
              <div key={k} className={`h-[72px] flex items-center rounded-[12px] pl-[12px] ${i === 0 ? "bg-[#cbcbcc]" : ""}`}>
                <span className="w-[36px] flex justify-center items-center">{icons[k]}</span>
                <span className="ml-[16px] text-[29.6px] text-[#3d3d40]">{t}</span>
              </div>
            ))}
          </nav>
        </aside>
        <main className="flex-1 min-w-0 flex flex-col overflow-hidden bg-white">
          <section className="relative h-[824px] shrink-0 bg-linear-to-b from-white from-[34%] to-[#f5f5f5] pl-[80px] overflow-hidden">
            <h1 className="mt-[72px] h-[80px] text-[65.8px] leading-[80px] font-bold text-[#222]">Обрати шаблон</h1>
            <h2 className="mt-[57px] h-[40px] text-[36px] leading-[40px] font-bold text-[#222]">Звичайні</h2>
            <div className="mt-[133px] flex gap-[40px]">
              <Item1 label="Порожній" selected><Blank /></Item1>
              <Item1 label="Порожній чорний" dark><Blank dark /></Item1>
              <Item1 label="Таблиця та діаграма"><TableChart /></Item1>
              <Item1 label="Основи зведеної таблиці"><Pivot /></Item1>
              <Item1 label="Основи діаграм"><ChartBasics /></Item1>
              <Item1 label="" />
            </div>
            <div className="absolute inset-y-0 right-0 w-[60px] bg-linear-to-r from-transparent to-[#fbfbfb]" />
          </section>
          <section className="relative h-[639px] shrink-0 bg-linear-to-b from-white from-[10%] to-[#f5f5f5] pl-[80px] pt-[25px] overflow-hidden">
            <h2 className="h-[40px] text-[36px] leading-[40px] font-bold text-[#222]">Особисті фінанси</h2>
            <div className="mt-[33px] flex gap-[40px]">
              <Item2 label="Простий бюджет"><SimpleBudget /></Item2>
              <Item2 tall label="Особистий бюджет"><PersonalBudget /></Item2>
              <Item2 tall label="Особисті заощадження"><Savings /></Item2>
              <Item2 cream label="Мої акції"><Stocks /></Item2>
              <Item2 cream label="Чиста вартість"><NetWorth /></Item2>
              <Item2 tall cream label="Заощадження на освіту"><Tuition /></Item2>
            </div>
            <div className="absolute inset-y-0 right-0 w-[130px] bg-linear-to-r from-transparent to-[#fafafa]" />
          </section>
          <div className="mt-[27px] flex-1 border-t-2 border-[#e6e6e6] flex justify-end items-start pt-[26px] pr-[40px] gap-[20px]">
            <button className="w-[173px] h-[40px] rounded-[9px] bg-white border border-[#e2e2e2] shadow-[0_1px_3px_rgba(0,0,0,0.18)] text-[26px] leading-[36px] text-[#2b2b2b]">Скасувати</button>
            <button className="w-[162px] h-[40px] rounded-[9px] bg-[#0ba65a] text-[26px] leading-[40px] text-white">Створити</button>
          </div>
        </main>
      </div>
    </div>
  );
}
